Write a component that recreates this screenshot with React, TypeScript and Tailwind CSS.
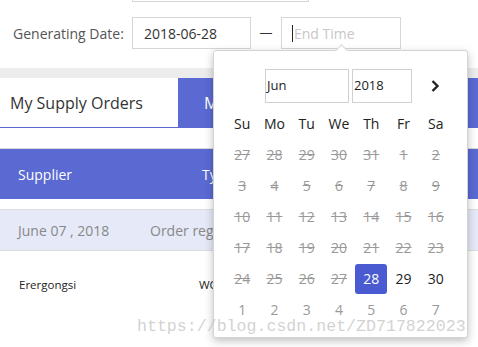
import React from "react";

const weeks: { d: number; s: "off" | "on" | "sel" | "next" }[][] = [
  [27, 28, 29, 30, 31, 1, 2].map((d) => ({ d, s: "off" as const })),
  [3, 4, 5, 6, 7, 8, 9].map((d) => ({ d, s: "off" as const })),
  [10, 11, 12, 13, 14, 15, 16].map((d) => ({ d, s: "off" as const })),
  [17, 18, 19, 20, 21, 22, 23].map((d) => ({ d, s: "off" as const })),
  [
    { d: 24, s: "off" },
    { d: 25, s: "off" },
    { d: 26, s: "off" },
    { d: 27, s: "off" },
    { d: 28, s: "sel" },
    { d: 29, s: "on" },
    { d: 30, s: "on" },
  ],
  [1, 2, 3, 4, 5, 6, 7].map((d) => ({ d, s: "next" as const })),
];

export default function App() {
  return (
    <div
      className="relative w-[478px] h-[347px] overflow-hidden bg-white"
      style={{ fontFamily: '"Open Sans", "Noto Sans", sans-serif' }}
    >
      {/* top stub of previous input */}
      <div className="ml-[132px] w-[177px] h-[2px] border-b border-l border-r border-[#d6d6d6]" />

      {/* date row */}
      <div className="mt-[15px] flex items-center h-[32px]">
        <div className="w-[132px] pl-[13px] text-[14px] text-[#555]">Generating Date:</div>
        <div className="w-[119px] h-[32px] border border-[#d6d6d6] flex items-center pl-[11px] text-[14px] text-[#333]">
          2018-06-28
        </div>
        <div className="w-[30px] flex justify-center text-[#333] text-[13px]">—</div>
        <div className="w-[120px] h-[32px] border border-[#d6d6d6] flex items-center pl-[10px] text-[14px] text-[#c8c8c8]">
          <span className="w-[1px] h-[17px] bg-[#222] mr-[1px]" />
          End Time
        </div>
      </div>

      {/* gray band */}
      <div className="mt-[19px] h-[10px] bg-[#ececec]" />

      {/* tabs */}
      <div className="flex h-[50px] border-b border-[#5a6ad2]">
        <div className="w-[178px] flex items-center pl-[10px] text-[16px] text-[#333]">My Supply Orders</div>
        <div className="flex-1 bg-[#5a6ad2] flex items-center pl-[26px] text-[16px] text-white">My Orders</div>
      </div>

      {/* table */}
      <div className="mt-[20px] border-t border-[#d8d8d8]">
        <div className="h-[50px] bg-[#5a6ad2] flex items-center text-white text-[14px]">
          <div className="w-[202px] pl-[18px]">Supplier</div>
          <div>Type</div>
        </div>
        <div className="mt-[10px] h-[42px] bg-[#e6e9f7] border-t border-b border-[#dcdcdc] flex items-center text-[14px] text-[#888]">
          <div className="w-[150px] pl-[18px]">June 07 , 2018</div>
          <div>Order register</div>
        </div>
        <div className="h-[68px] flex items-center text-[11.5px] text-[#222]">
          <div className="w-[199px] pl-[19px]">Erergongsi</div>
          <div>WC</div>
        </div>
      </div>

      {/* datepicker popover */}
      <div className="absolute left-[213px] top-[50px] w-[255px] h-[288px] bg-white border border-[#d4d4d4] rounded-[3px] shadow-[0_3px_8px_rgba(0,0,0,0.25)]">
        <div className="absolute -top-[5px] left-[123px] w-[9px] h-[9px] bg-white border-l border-t border-[#d4d4d4] rotate-45" />
        <div className="mt-[18px] flex items-center h-[34px]">
          <div className="ml-[51px] w-[84px] h-[34px] border border-[#d0d0d0] flex items-center pl-[1px] text-[13px] text-[#222]">
            Jun
          </div>
          <div className="ml-[3px] w-[60px] h-[34px] border border-[#d0d0d0] flex items-center pl-[1px] text-[13px] text-[#222]">
            2018
          </div>
          <div className="ml-[18px] flex items-center">
            <svg width="10" height="14" viewBox="0 0 10 14">
              <path d="M2.5 2 L7.5 7 L2.5 12" fill="none" stroke="#222" strokeWidth="2.4" />
            </svg>
          </div>
        </div>
        <div className="mt-[5px] pl-[12px] pr-[15px]">
          <div className="grid grid-cols-7 h-[31px] items-center text-center text-[14px] text-[#222]">
            {["Su", "Mo", "Tu", "We", "Th", "Fr", "Sa"].map((w) => (
              <div key={w}>{w}</div>
            ))}
          </div>
          {weeks.map((row, i) => (
            <div key={i} className="grid grid-cols-7 h-[31px] items-center text-center text-[14px]">
              {row.map((c, j) => (
                <div key={j} className="flex justify-center">
                  {c.s === "sel" ? (
                    <div className="w-[32px] h-[30px] rounded-[3px] bg-[#4a5bd1] text-white flex items-center justify-center">
                      {c.d}
                    </div>
                  ) : c.s === "off" ? (
                    <span className="text-[#999] line-through">{c.d}</span>
                  ) : c.s === "next" ? (
                    <span className="text-[#999]">{c.d}</span>
                  ) : (
                    <span className="text-[#222]">{c.d}</span>
                  )}
                </div>
              ))}
            </div>
          ))}
        </div>
      </div>

      {/* watermark */}
      <div
        className="absolute left-[137px] top-[315px] text-[16.6px] text-[rgba(190,190,190,0.7)] whitespace-nowrap"
        style={{ fontFamily: '"Liberation Mono", monospace' }}
      >
        https://blog.csdn.net/ZD717822023
      </div>
    </div>
  );
}
